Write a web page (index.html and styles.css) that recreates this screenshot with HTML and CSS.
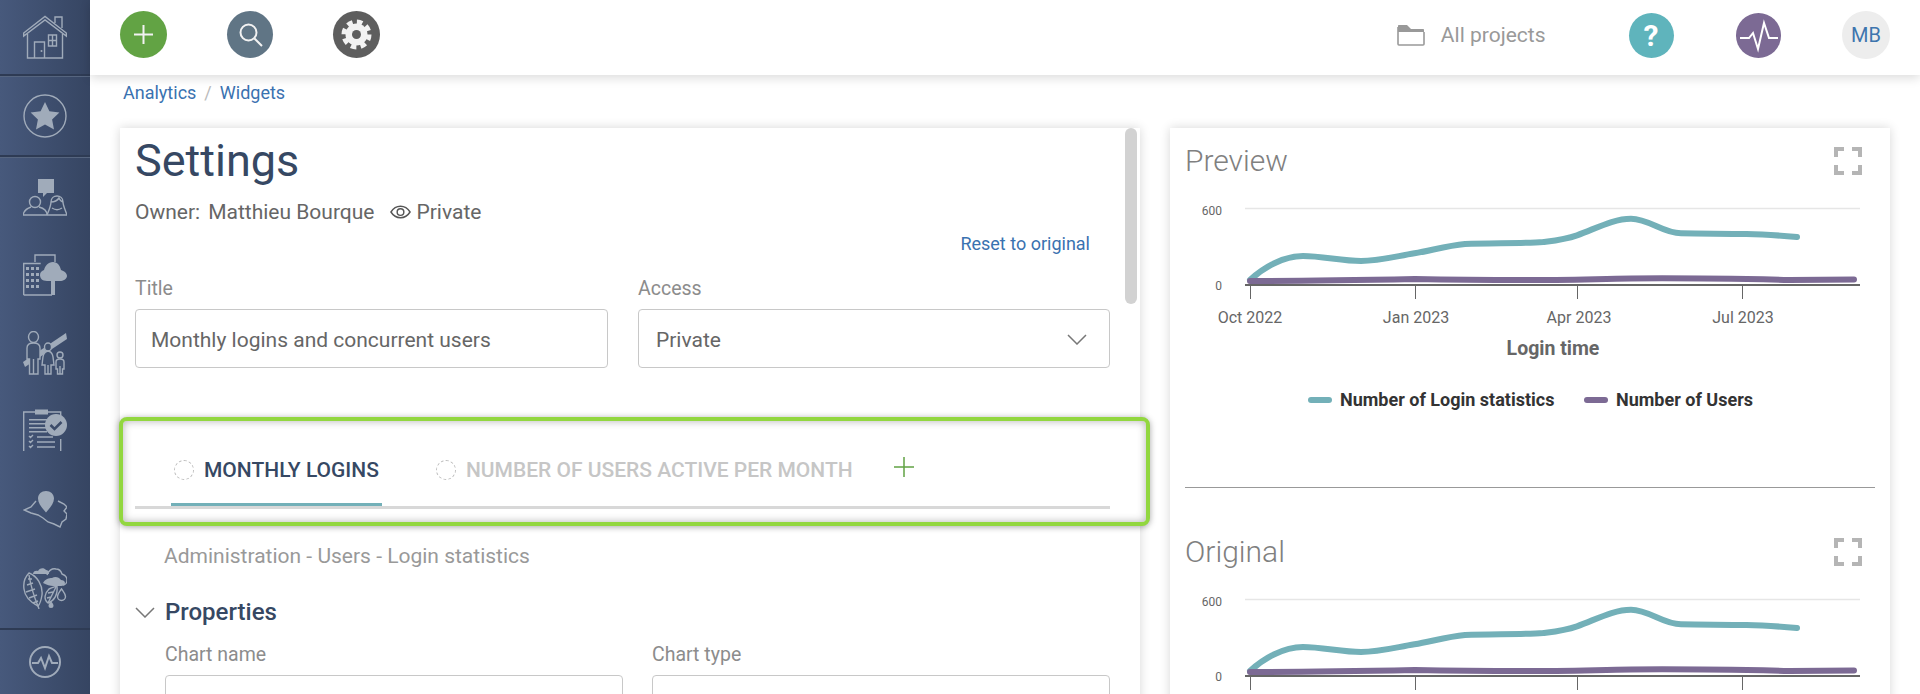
FILE: index.html
```html
<!DOCTYPE html>
<html lang="en">
<head>
<meta charset="utf-8">
<title>Widget settings</title>
<link rel="stylesheet" href="styles.css">
</head>
<body>
<svg class="defs" width="0" height="0" aria-hidden="true">
  <defs>
    <symbol id="fullscreen" viewBox="0 0 28 28">
      <path d="M0 0h10v4H4v6H0zM18 0h10v10h-4V4h-6zM0 18h4v6h6v4H0zM24 18h4v10H18v-4h6z"/>
    </symbol>
    <symbol id="chart" viewBox="0 0 690 306">
      <line class="grid" x1="60" y1="27.5" x2="675" y2="27.5"/>
      <text class="ytick" x="37" y="34">600</text>
      <text class="ytick" x="37" y="109">0</text>
      <path class="line-teal" d="M65 99C78 87 98 75 118 75C137 75 157 80 176 80C194 80 211.500 75.200 229.500 72.300C246 69.600 262 64.600 280 63C306 62 342 62.500 358 61C370 59.500 380 58.500 392 54.300C410 48 428 37.700 446 37.700C464 37.700 478 52.300 496 52.300C518 52.800 540 52.500 561.500 53C578 53.300 595 54.500 612 56"/>
      <path class="line-purple" d="M65 100C120 100 180 99 230 98C280 99 310 99 340 99C380 99 410 98 446 97.500C490 97 560 98 605 99C630 99 650 98.500 669 98.500"/>
      <line class="axis" x1="60" y1="104" x2="675" y2="104"/>
      <path class="tick" d="M65.500 104v14M230.500 104v14M392.500 104v14M557.500 104v14"/>
      <text class="xtick" x="65" y="142">Oct 2022</text>
      <text class="xtick" x="231" y="142">Jan 2023</text>
      <text class="xtick" x="394" y="142">Apr 2023</text>
      <text class="xtick" x="558" y="142">Jul 2023</text>
      <text class="xtitle" x="368" y="174">Login time</text>
      <line class="swatch-teal" x1="126" y1="219" x2="144" y2="219"/>
      <text class="legend" x="155" y="225">Number of Login statistics</text>
      <line class="swatch-purple" x1="402" y1="219" x2="420" y2="219"/>
      <text class="legend" x="431" y="225">Number of Users</text>
    </symbol>
  </defs>
</svg>

<div class="app">
  <aside class="sidebar">
    <div class="side-section side-home">
      <svg class="side-icon" viewBox="0 0 44 44"><path d="M.7 18 22 1.500 43.300 18v3L22 5 .7 21zM32 8V2h7v11"/><path d="M4.500 19v24h35V19M11.500 43V27h10v16M25.500 20h8v11h-8zM29.500 20v11M25.500 25.500h8"/><circle class="solid" cx="18.500" cy="36" r="1"/></svg>
    </div>
    <div class="side-section side-fav">
      <svg class="side-icon" viewBox="0 0 44 44"><circle cx="22" cy="22" r="21"/><path class="solid" d="m22 8 4.400 9.200 10 1.300-7.300 7 1.900 10L22 30.600l-9 4.900 1.900-10-7.300-7 10-1.300z"/></svg>
    </div>
    <nav class="side-list">
      <div class="side-item">
        <svg class="side-icon" viewBox="0 0 44 44"><path class="solid" d="M15 4h16v14h-7l-4 4v-4h-5z"/><circle cx="12" cy="27" r="5.500"/><path d="M0 40c1-5 5-7 8-8M16 32c4 1 8 3 8 8H0M24 40h20"/><path d="M28 27c0-4 3-6 6-6s6 2 6 6c0 3 1 5 4 13M28 27c3 0 6-1 8-4 1 2 3 4 4 4M28 27c0 3-1 6-4 13M29 33c3 2 7 2 10 0"/></svg>
      </div>
      <div class="side-item">
        <svg class="side-icon" viewBox="0 0 44 44"><path d="M12 9V2h20v7M.7 42V10.500h17M.7 42H29"/><path class="solid" d="M3 14h3v3H3zM8 14h3v3H8zM13 14h3v3h-3zM3 20h3v3H3zM8 20h3v3H8zM13 20h3v3h-3zM3 26h3v3H3zM8 26h3v3H8zM13 26h3v3h-3zM3 32h3v3H3zM8 32h3v3H8zM13 32h3v3h-3z"/><path class="solid" d="M30 9c5 0 7 4 8 8 3 1 6 3 6 6 0 3-4 5-7 5h-5v14h-4V28h-4c-5 0-7-3-7-6 0-3 2-4 4-5 1-4 4-8 9-8z"/></svg>
      </div>
      <div class="side-item">
        <svg class="side-icon" viewBox="0 0 44 44"><path class="solid" d="M43 2 44 8 2 36 0 31z"/><ellipse class="cut" cx="10.500" cy="6" rx="5" ry="5.500"/><path class="cut" d="M4 28V17c0-4 3-5 6.500-5S17 13 17 17v11h-2v15H6.500V28z"/><path d="M10.500 28v15"/><ellipse class="cut" cx="25" cy="16" rx="3.500" ry="4"/><path class="cut" d="M19 34c1-6 0-13 6-14 6 1 5 8 6 14h-3v9h-6v-9z"/><path d="M25 34v9"/><circle class="cut" cx="37" cy="24" r="3"/><path class="cut" d="M33 38v-7c0-2 2-3 4-3s4 1 4 3v7h-1.500v5h-5v-5z"/><path d="M37 35v8"/></svg>
      </div>
      <div class="side-item">
        <svg class="side-icon" viewBox="0 0 44 44"><path d="M.7 42V3h37v6M37.700 30v12"/><path class="solid" d="M12 .5h13v5H12zM6 10h20v1.500H6zM6 14h20v1.500H6zM6 18h17v1.500H6zM6 22h18v1.500H6z"/><path d="M6 27l1.500 1.500L10 26M6 32l1.500 1.500L10 31M6 37l1.500 1.500L10 36M14 28h16M14 33h18M14 38h18"/><circle class="solid" cx="33" cy="16" r="11"/><path class="check" d="m27.500 16 4 4 7-7"/></svg>
      </div>
      <div class="side-item">
        <svg class="side-icon" viewBox="0 0 44 44"><path class="solid" d="M23 4c4.500 0 8 3 8 7.500 0 5-4.500 10-8 14-3.500-4-8-9-8-14C15 7 18.500 4 23 4z"/><path d="M13 14 8 20l-7 3 7 3 7 2 5 3 5 4 6 2 6 3 2-5 4-3 1-5-3-3 3-4-3-3-6-3"/></svg>
      </div>
      <div class="side-item">
        <svg class="side-icon" viewBox="0 0 44 44"><path class="solid" d="M10 9c0-3 3-4 5-3 1-3 6-4 8-1 2 0 3 2 3 4z"/><path d="M24 10c1-4 5-7 9-6 3 0 5 2 6 5 3 1 5 3 5 6s-2 5-4 5"/><path class="solid" d="M20 18c2-4 6-5 9-5 3-2 7-1 9 2 2 0 4 1 4 3 0 2-2 3-4 3H30c-3 0-6-1-10-3z"/><path class="cut" d="M6 8C14 11 20 20 19 30 18 36 16 40 15 41 9 38 2 33 1 24 0 17 2 12 6 8z"/><path d="M6 10C8 22 12 34 15 41M16 44l-1-3M4 20l6-2M3 27l9-3M6 33l8-3M10 38l5-2M5 14l4 0"/><path class="cut" d="M26 24C30 22 32 22 34 21 35 30 31 36 25 38 20 34 22 28 26 24z"/><path d="M33 22 25 38M25 28l5-1M24 33l4-1"/><path class="solid" d="M28 36c1 1.500 2.500 3 2.500 4.500a2.500 2.500 0 0 1-5 0c0-1.500 1.500-3 2.500-4.500z"/><path d="M38.500 24c2 3 4 5 4 7.500a4 4 0 0 1-8 0c0-2.500 2-4.500 4-7.500z"/></svg>
      </div>
    </nav>
    <div class="side-section side-activity">
      <svg class="side-icon small" viewBox="0 0 32 32"><circle cx="16" cy="16" r="15"/><path d="M3 17h6l3-5 4 10 4-12 3 7h6"/></svg>
    </div>
  </aside>

  <div class="main">
    <header class="topbar">
      <div class="actions">
        <button class="round green" type="button" aria-label="Add"><svg viewBox="0 0 47 47"><path d="M23.500 14v19M14 23.500h19"/></svg></button>
        <button class="round slate" type="button" aria-label="Search"><svg viewBox="0 0 47 47"><circle cx="21.500" cy="21.500" r="8"/><path d="m27.500 27.500 7.500 7.500"/></svg></button>
        <button class="round dark" type="button" aria-label="Settings"><svg viewBox="0 0 47 47"><circle class="gear-teeth" cx="23.500" cy="23.500" r="12.500"/><circle class="gear-body" cx="23.500" cy="23.500" r="11"/><circle class="gear-hole" cx="23.500" cy="23.500" r="4.500"/></svg></button>
      </div>
      <div class="status">
        <span class="project">
          <svg class="folder" viewBox="0 0 28 22"><path class="folder-tab" d="M1 7V2c0-.6.4-1 1-1h8l4 4h12c.6 0 1 .4 1 1v2H1z"/><path class="folder-body" d="M1 3v17c0 .6.400 1 1 1h24c.6 0 1-.4 1-1V8"/></svg>
          <span>All projects</span>
        </span>
        <span class="help">?</span>
        <span class="pulse"><svg viewBox="0 0 45 45"><path d="M4 27h9l4-5 5 16 6-26 5 15h9" transform="translate(0 -2)"/></svg></span>
        <span class="avatar">MB</span>
      </div>
    </header>

    <div class="crumbs"><a>Analytics</a><span class="sep">/</span><a>Widgets</a></div>

    <div class="content">
      <section class="card settings">
        <div class="thumb"></div>
        <h1>Settings</h1>
        <div class="owner">
          <span>Owner:</span><span class="owner-name">Matthieu Bourque</span>
          <svg class="eye" viewBox="0 0 22 14"><path d="M1 7c2.500-4 6-6 10-6s7.500 2 10 6c-2.500 4-6 6-10 6S3.500 11 1 7z"/><circle cx="11" cy="7" r="3.500"/></svg>
          <span>Private</span>
        </div>
        <div class="reset"><a>Reset to original</a></div>
        <div class="field-row top">
          <div class="field">
            <label>Title</label>
            <div class="box">Monthly logins and concurrent users</div>
          </div>
          <div class="field">
            <label>Access</label>
            <div class="box select">Private
              <svg class="chev" viewBox="0 0 20 11"><path d="m1 1 9 9 9-9"/></svg>
            </div>
          </div>
        </div>
        <div class="highlight">
          <div class="tabs">
            <div class="tab active"><i class="dash"></i><span>MONTHLY LOGINS</span></div>
            <div class="tab"><i class="dash"></i><span>NUMBER OF USERS ACTIVE PER MONTH</span></div>
            <svg class="add" viewBox="0 0 20 20"><path d="M10 0v20M0 10h20"/></svg>
          </div>
        </div>
        <div class="source">Administration - Users - Login statistics</div>
        <div class="section-head">
          <svg class="chev" viewBox="0 0 20 11"><path d="m1 1 9 9 9-9"/></svg>
          <h2>Properties</h2>
        </div>
        <div class="field-row sub">
          <div class="field"><label>Chart name</label><div class="box"></div></div>
          <div class="field"><label>Chart type</label><div class="box"></div></div>
        </div>
      </section>

      <section class="card previews">
        <div class="chart-block">
          <div class="chart-head"><h3>Preview</h3><svg class="fs"><use href="#fullscreen"/></svg></div>
          <svg class="chart"><use href="#chart"/></svg>
        </div>
        <div class="chart-block second">
          <div class="chart-head"><h3>Original</h3><svg class="fs"><use href="#fullscreen"/></svg></div>
          <svg class="chart"><use href="#chart"/></svg>
        </div>
      </section>
    </div>
  </div>
</div>
</body>
</html>
```
FILE: styles.css
```css
* { box-sizing: border-box; }
html, body { margin: 0; height: 694px; overflow: hidden; background: #fff; }
body { font-family: Roboto, "Liberation Sans", sans-serif; color: #666; }
.defs { position: absolute; }
.app { display: flex; height: 694px; }

/* sidebar */
.sidebar {
  width: 90px; flex: none; display: flex; flex-direction: column;
  background: linear-gradient(to right, #47597c, #364562);
}
.side-section { display: flex; align-items: center; justify-content: center; border-bottom: 2px solid #2e3b54; box-shadow: 0 1px 0 #56657f; }
.side-home { height: 76px; }
.side-fav { height: 81px; }
.side-list { display: flex; flex-direction: column; padding-top: 1px; height: 471px; }
.side-item { height: 78px; display: flex; align-items: center; justify-content: center; }
.side-activity { flex: 1; align-items: flex-start; padding-top: 16px; border-bottom: 0; box-shadow: none; border-top: 2px solid #2e3b54; }
.side-icon { width: 44px; height: 44px; fill: none; stroke: #a0abba; stroke-width: 1.400; }
.side-icon.small { width: 32px; height: 32px; stroke-width: 2; }
.side-icon .solid { fill: #a0abba; stroke: none; }
.side-icon .cut { fill: #40516f; }
.side-icon .check { stroke: #3c4b69; stroke-width: 2.500; }

/* top bar */
.main { flex: 1; min-width: 0; display: flex; flex-direction: column; }
.topbar {
  height: 75px; flex: none; display: flex; justify-content: space-between; align-items: center;
  padding: 0 30px; background: #fff; box-shadow: 0 3px 10px rgba(0, 0, 0, .14); position: relative; z-index: 2;
}
.actions { display: flex; gap: 60px; margin-top: -6px; }
.round { width: 47px; height: 47px; border: 0; padding: 0; border-radius: 50%; display: block; }
.round svg { display: block; width: 47px; height: 47px; fill: none; stroke: #f2f2f2; stroke-width: 2; }
.green { background: #62a344; }
.slate { background: #607585; width: 46px; }
.dark { background: #5e5e5e; }
.gear-teeth { stroke-width: 5; stroke: #f2f2f2; stroke-dasharray: 5.500 4.320; }
.gear-body { fill: #f2f2f2; stroke: none; }
.gear-hole { fill: #5e5e5e; stroke: none; }
.status { display: flex; align-items: center; margin-top: -5px; }
.project { display: flex; align-items: center; gap: 16px; font-size: 21px; color: #999; margin-right: 83px; }
.folder { width: 28px; height: 22px; fill: none; }
.folder-tab { fill: #999; }
.folder-body { stroke: #999; stroke-width: 1.600; }
.help {
  width: 45px; height: 45px; border-radius: 50%; background: #5fb4bc; color: #fff;
  display: flex; align-items: center; justify-content: center; font-size: 30px; font-weight: 700; margin-right: 62px;
}
.pulse { width: 45.500px; height: 45px; border-radius: 50%; background: #7c6a94; margin-right: 61px; }
.pulse svg { display: block; width: 45px; height: 45px; fill: none; stroke: #fff; stroke-width: 2; }
.avatar {
  width: 48px; height: 48px; border-radius: 50%; background: #ededed; color: #3e75ae;
  display: flex; align-items: center; justify-content: center; font-size: 20px;
}

/* breadcrumb */
.crumbs { height: 34px; margin-bottom: 19px; padding-left: 33px; display: flex; align-items: center; font-size: 18px; color: #3a72b0; }
.sep { margin: 0 8px; color: #bbb; }

/* cards */
.content { flex: 1; min-height: 0; display: flex; gap: 30px; padding: 0 30px; }
.card { background: #fff; box-shadow: 0 0 10px rgba(0, 0, 0, .16); height: 600px; }
.settings { width: 1020px; flex: none; position: relative; padding: 7px 30px 0 15px; }
.previews { width: 720px; flex: none; padding: 0 15px; }
.thumb { position: absolute; top: 0; right: 3px; width: 12px; height: 176px; border-radius: 6px; background: #d2d2d2; }
h1 { margin: 0; font-size: 45px; line-height: 52px; font-weight: 400; color: #364863; }
.owner { display: flex; align-items: center; margin-top: 13px; font-size: 21px; line-height: 24px; color: #666; }
.owner-name { margin-left: 8px; margin-right: 16px; }
.eye { width: 21px; height: 14px; margin-right: 5px; fill: none; stroke: #555; stroke-width: 1.500; }
.reset { margin-top: 10px; padding-right: 20px; text-align: right; font-size: 18px; line-height: 20px; color: #3a72b0; }
.field-row { display: grid; grid-template-columns: 473px 472px; column-gap: 30px; }
.field-row.top { margin-top: 23px; }
.field-row.sub { grid-template-columns: 458px 458px; column-gap: 29px; margin-top: 16px; margin-left: 30px; }
.field label { display: block; font-size: 19.500px; line-height: 24px; color: #8c8c8c; margin-bottom: 8px; }
.box { height: 59px; border: 1px solid #c8c8c8; border-radius: 4px; padding: 2px 15px 0; display: flex; align-items: center; justify-content: space-between; font-size: 21px; color: #666; }
.select { padding: 2px 22px 0 17px; }
.chev { width: 20px; height: 11px; fill: none; stroke: #777; stroke-width: 1.500; flex: none; }

/* highlighted tabs */
.highlight {
  height: 109px; margin: 49px -40px 0 -16px; padding: 0 36px 13px 12px; position: relative; z-index: 1;
  border: 4px solid #92d73f; border-radius: 8px; background: #fff;
  box-shadow: 0 1px 6px rgba(0, 0, 0, .35), inset 0 0 9px rgba(0, 0, 0, .3);
}
.tabs { height: 88px; padding-left: 36px; display: flex; align-items: flex-end; gap: 51px; border-bottom: 3px solid #d8d8d8; }
.tab { display: flex; align-items: center; gap: 10px; height: 48px; padding: 0 3px 21px; border-bottom: 3px solid transparent; font-size: 21px; font-weight: 500; line-height: 24px; color: #c6c6c6; }
.tab.active { color: #364863; border-bottom-color: #73b0b8; }
.dash { display: block; width: 20px; height: 20px; border: 1px dashed #bbb; border-radius: 50%; }
.add { width: 20px; height: 20px; margin-bottom: 29px; margin-left: -13px; fill: none; stroke: #62a344; stroke-width: 1.500; flex: none; }
.source { margin: 18px 0 0 29px; font-size: 21px; line-height: 24px; color: #999; }
.section-head { display: flex; align-items: center; gap: 10px; margin-top: 29px; padding-left: 0; }
h2 { margin: 0; font-size: 24px; line-height: 30px; font-weight: 500; color: #364863; }

/* charts */
.chart-block { padding-top: 12px; }
.chart-block.second { padding-top: 43px; border-top: 1px solid #999; }
.chart-head { height: 41px; display: flex; align-items: center; justify-content: space-between; padding-right: 13px; }
h3 { margin: 0; font-size: 30px; font-weight: 300; color: #808080; }
.fs { width: 28px; height: 28px; fill: #b5b5b5; }
.chart { display: block; width: 690px; height: 306px; }
.grid { stroke: #e6e6e6; stroke-width: 1.500; }
.axis { stroke: #666; stroke-width: 2; }
.tick { stroke: #666; stroke-width: 1; fill: none; }
.line-teal { fill: none; stroke: #73b0b8; stroke-width: 6; stroke-linecap: round; }
.line-purple { fill: none; stroke: #7c6a94; stroke-width: 6; stroke-linecap: round; }
.swatch-teal { stroke: #73b0b8; stroke-width: 6; stroke-linecap: round; }
.swatch-purple { stroke: #7c6a94; stroke-width: 6; stroke-linecap: round; }
.ytick { font-size: 12px; fill: #666; text-anchor: end; }
.xtick { font-size: 16px; fill: #666; text-anchor: middle; }
.xtitle { font-size: 19.500px; font-weight: 700; fill: #666; text-anchor: middle; }
.legend { font-size: 18px; font-weight: 700; fill: #333; }
```
